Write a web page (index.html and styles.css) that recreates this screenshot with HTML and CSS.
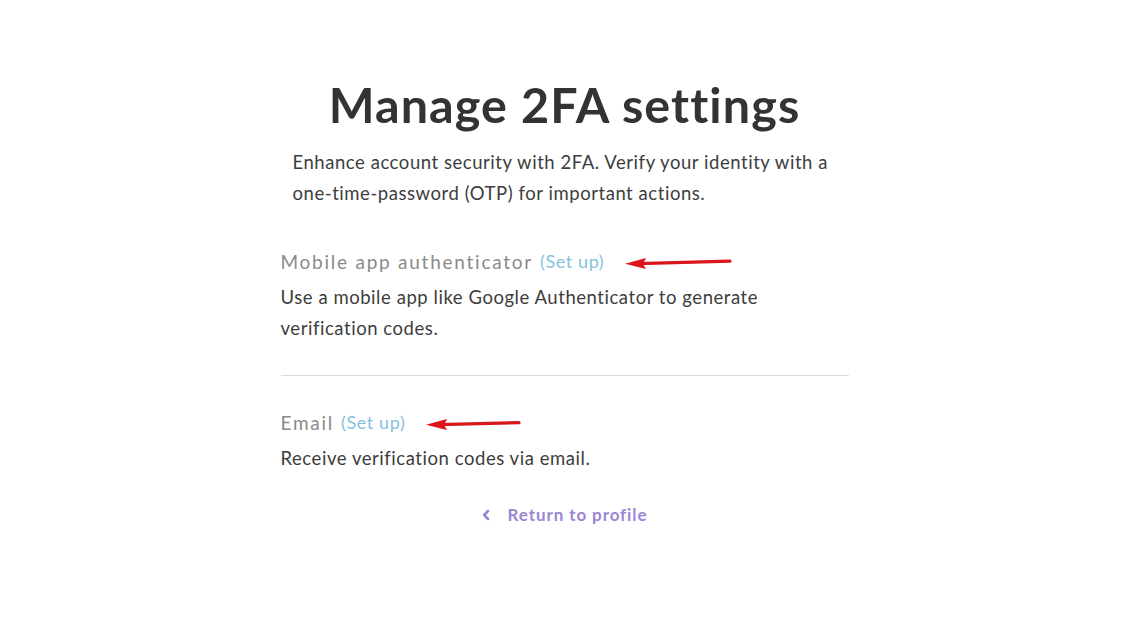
FILE: index.html
```html
<!DOCTYPE html>
<html lang="en">
<head>
<meta charset="utf-8">
<title>Manage 2FA settings</title>
<link rel="stylesheet" href="styles.css">
</head>
<body>
<main class="page">
  <h1 class="title">Manage 2FA settings</h1>
  <p class="intro">Enhance account security with 2FA. Verify your identity with a one-time-password (OTP) for important actions.</p>

  <section class="method">
    <h2 class="method-head">Mobile app authenticator <a class="setup" href="#">(Set up)</a><svg class="arrow arrow-long" width="108" height="14" viewBox="0 0 108 14"><path d="M14 7.6 L106 5.2" stroke="#d8161c" stroke-width="3.2" stroke-linecap="round" fill="none"/><path d="M1 7.8 L22 2 L19 8 L22 13 Z" fill="#e0141b"/></svg></h2>
    <p class="method-text">Use a mobile app like Google Authenticator to generate verification codes.</p>
  </section>

  <hr class="sep">

  <section class="method">
    <h2 class="method-head">Email <a class="setup" href="#">(Set up)</a><svg class="arrow arrow-short" width="96" height="14" viewBox="0 0 96 14"><path d="M14 7.6 L94 5.6" stroke="#d8161c" stroke-width="3.2" stroke-linecap="round" fill="none"/><path d="M1 7.8 L22 2 L19 8 L22 13 Z" fill="#e0141b"/></svg></h2>
    <p class="method-text">Receive verification codes via email.</p>
  </section>

  <a class="back" href="#"><svg class="chev" width="8" height="12" viewBox="0 0 8 12"><path d="M6 2 L2.2 6 L6 10" stroke="#9b86d4" stroke-width="2.6" fill="none" stroke-linecap="round" stroke-linejoin="round"/></svg><span>Return to profile</span></a>
</main>
</body>
</html>
```
FILE: styles.css
```css
html, body {
  margin: 0;
  padding: 0;
  background: #ffffff;
}
body {
  font-family: "Lato", "Noto Sans", sans-serif;
  color: #3a3a3a;
}
.page {
  width: 568px;
  margin: 0 auto;
  padding: 75px 0 40px;
  position: relative;
  left: 4px;
  display: flex;
  flex-direction: column;
}
.title {
  margin: 0;
  text-align: center;
  font-family: "Lato", sans-serif;
  font-weight: 700;
  font-size: 48.5px;
  line-height: 58px;
  color: #333333;
  letter-spacing: 1.1px;
}
.intro {
  margin: 14px 12px 0 12px;
  font-size: 18.5px;
  line-height: 31px;
  color: #3d3d3d;
  letter-spacing: 0.55px;
}
.method-head {
  margin: 37px 0 0 0;
  font-weight: 400;
  font-size: 19px;
  line-height: 31px;
  color: #8a8a8a;
  letter-spacing: 1.75px;
  display: flex;
  align-items: center;
  white-space: nowrap;
}
.setup {
  margin-left: 7px;
  color: #86c1de;
  text-decoration: none;
  letter-spacing: 0.6px;
  font-size: 18px;
}
.arrow {
  margin-left: 20px;
  margin-top: 2px;
}
.method-text {
  margin: 5px 0 0 0;
  font-size: 18.5px;
  line-height: 31px;
  color: #3d3d3d;
  letter-spacing: 0.55px;
}
.sep {
  margin: 31px 0 0 0;
  border: 0;
  border-top: 1px solid #dcdcdc;
  height: 0;
}
.sep + .method .method-head {
  margin-top: 31px;
}
.back {
  margin-top: 25px;
  align-self: center;
  display: flex;
  align-items: center;
  gap: 18px;
  text-decoration: none;
  color: #9b86d4;
  font-weight: 700;
  font-size: 17px;
  line-height: 31px;
  letter-spacing: 0.9px;
}
```
